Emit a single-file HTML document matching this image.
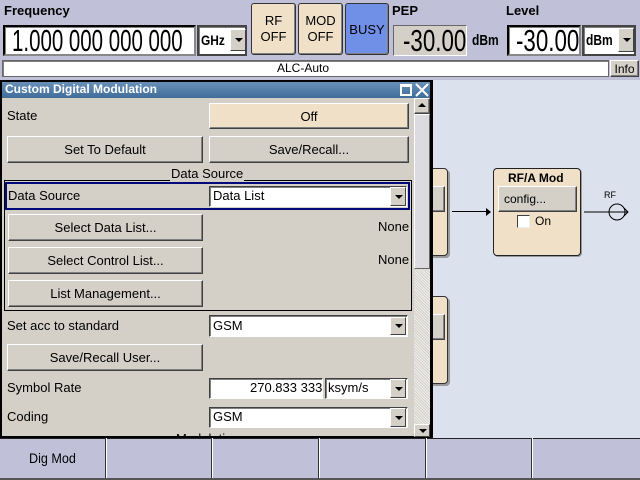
<!DOCTYPE html>
<html><head><meta charset="utf-8"><style>
*{box-sizing:border-box;margin:0;padding:0}
body{width:640px;height:480px;position:relative;overflow:hidden;background:#dce1ee;font-family:"Liberation Sans",sans-serif;font-size:13px;color:#000}
.a{position:absolute}
.lbl{position:absolute;font-size:13px;white-space:nowrap}
.bold{font-weight:bold}
.btn{position:absolute;background:#d4d0c8;border:1px solid;border-color:#fff #404040 #404040 #fff;box-shadow:inset -1px -1px #808080;text-align:center;font-size:13px;display:flex;align-items:center;justify-content:center}
.field{position:absolute;background:#fff;border:1px solid;border-color:#404040 #fff #fff #404040;box-shadow:inset 1px 1px #808080}
.arrow{position:absolute;background:#d4d0c8;border:1px solid;border-color:#fff #404040 #404040 #fff;width:16px}
.arrow:after{content:"";position:absolute;left:4px;top:50%;margin-top:-2px;border-left:4px solid transparent;border-right:4px solid transparent;border-top:4px solid #000}
.big{position:absolute;font-size:31px;transform:scaleX(.72);transform-origin:left center;white-space:nowrap;line-height:30px}
</style></head><body>
<div class="a" style="left:0;top:0;width:640px;height:80px;background:#c0c0d8"></div>
<div class="lbl bold" style="left:4px;top:3px">Frequency</div>
<div class="field" style="left:3px;top:25px;width:193px;height:31px;border:2px solid #000;border-right-color:#888;border-bottom-color:#888"></div>
<div class="big" style="left:12px;top:26px;transform:scaleX(.66)">1.000 000 000 000</div>
<div class="field" style="left:197px;top:25px;width:50px;height:31px;border:2px solid #444"></div>
<div class="lbl bold" style="left:201px;top:32px;font-size:14px;transform:scaleX(.85);transform-origin:left">GHz</div>
<div class="arrow" style="left:230px;top:29px;height:22px"></div>
<div class="btn" style="left:251px;top:3px;width:45px;height:52px;background:#f0e0c8;border:1px solid #333;border-radius:3px;line-height:16px">RF<br>OFF</div>
<div class="btn" style="left:298px;top:3px;width:45px;height:52px;background:#f0e0c8;border:1px solid #333;border-radius:3px;line-height:16px">MOD<br>OFF</div>
<div class="btn" style="left:345px;top:3px;width:44px;height:52px;background:#7090e8;border:1px solid #333;border-radius:3px">BUSY</div>
<div class="lbl bold" style="left:392px;top:3px">PEP</div>
<div class="a" style="left:393px;top:25px;width:74px;height:31px;background:#d4d0c8;border:1px solid;border-color:#666 #fff #fff #666"></div>
<div class="big" style="left:403px;top:26px">-30.00</div>
<div class="lbl bold" style="left:472px;top:32px;font-size:15px;transform:scaleX(.8);transform-origin:left">dBm</div>
<div class="lbl bold" style="left:506px;top:3px">Level</div>
<div class="field" style="left:507px;top:25px;width:74px;height:31px;border:2px solid #000;border-right-color:#888;border-bottom-color:#888"></div>
<div class="big" style="left:516px;top:26px">-30.00</div>
<div class="field" style="left:582px;top:25px;width:54px;height:31px;border:2px solid #444"></div>
<div class="lbl bold" style="left:586px;top:32px;font-size:15px;transform:scaleX(.8);transform-origin:left">dBm</div>
<div class="arrow" style="left:618px;top:28px;height:24px"></div>
<div class="field" style="left:2px;top:60px;width:607px;height:17px;border:1px solid #666"></div>
<div class="lbl" style="left:277px;top:61px;font-size:12px">ALC-Auto</div>
<div class="btn" style="left:610px;top:60px;width:29px;height:17px;font-size:12px">Info</div>

<div class="a" style="left:420px;top:168px;width:28px;height:88px;background:#f0e0c8;border:1px solid #333;border-radius:4px;box-shadow:2px 2px #999"></div>
<div class="a" style="left:420px;top:296px;width:28px;height:88px;background:#f0e0c8;border:1px solid #333;border-radius:4px;box-shadow:2px 2px #999"></div>
<div class="btn" style="left:420px;top:186px;width:25px;height:26px"></div>
<div class="btn" style="left:420px;top:314px;width:25px;height:26px"></div>
<div class="a" style="left:452px;top:211px;width:38px;height:1px;background:#000"></div>
<div class="a" style="left:486px;top:208px;border-top:4px solid transparent;border-bottom:4px solid transparent;border-left:5px solid #000"></div>
<div class="a" style="left:493px;top:168px;width:88px;height:88px;background:#f0e0c8;border:1px solid #222;border-radius:4px;box-shadow:1px 1px #999"></div>
<div class="lbl bold" style="left:508px;top:171px;font-size:12px">RF/A Mod</div>
<div class="btn" style="left:498px;top:186px;width:79px;height:26px;justify-content:flex-start;padding-left:5px;font-size:12px">config...</div>
<div class="a" style="left:517px;top:215px;width:13px;height:13px;background:#fff;border:1px solid;border-color:#404040 #eee #eee #404040"></div>
<div class="lbl" style="left:535px;top:214px;font-size:12px">On</div>
<svg class="a" style="left:580px;top:185px" width="50" height="40"><line x1="4" y1="27" x2="30" y2="27" stroke="#000"/><circle cx="37" cy="27" r="8" fill="none" stroke="#000"/><line x1="30" y1="27" x2="48" y2="27" stroke="#000"/><polyline points="44,23 48,27 44,31" fill="none" stroke="#000"/><text x="24" y="13" font-size="9" font-family="Liberation Sans">RF</text></svg>

<div class="a" style="left:0;top:80px;width:433px;height:358px;background:#d4d0c8;border:2px solid #000;border-right-width:3px"></div>
<div class="a" style="left:2px;top:82px;width:428px;height:16px;background:linear-gradient(#6890b8,#3f6d9a)"></div>
<div class="lbl bold" style="left:5px;top:82px;color:#fff;font-size:12px">Custom Digital Modulation</div>
<div class="a" style="left:400px;top:84px;width:12px;height:12px;border:2px solid #fff;border-top-width:3px"></div>
<svg class="a" style="left:415px;top:83px" width="14" height="14"><path d="M1 1L13 13M13 1L1 13" stroke="#fff" stroke-width="2"/></svg>
<div class="a" style="left:414px;top:98px;width:16px;height:338px;background:repeating-linear-gradient(45deg,#d4d0c8 0 1px,#eee 1px 2px)"></div>
<div class="btn" style="left:414px;top:98px;width:16px;height:16px"></div>
<div class="a" style="left:418px;top:103px;border-left:4px solid transparent;border-right:4px solid transparent;border-bottom:4px solid #000"></div>
<div class="a" style="left:414px;top:114px;width:16px;height:155px;background:#dcdce0;border:1px solid;border-color:#fff #666 #666 #fff"></div>
<div class="arrow" style="left:414px;top:424px;height:13px"></div>

<div class="lbl" style="left:7px;top:108px">State</div>
<div class="btn" style="left:209px;top:103px;width:200px;height:26px;background:#f0e0c8">Off</div>
<div class="btn" style="left:7px;top:136px;width:196px;height:27px">Set To Default</div>
<div class="btn" style="left:209px;top:136px;width:200px;height:27px">Save/Recall...</div>
<div class="a" style="left:4px;top:180px;width:408px;height:131px;border:1px solid #000"></div>
<div class="lbl" style="left:170px;top:166px;background:#d4d0c8;padding:0 1px">Data Source</div>
<div class="a" style="left:5px;top:182px;width:405px;height:28px;border:2px solid #00087a"></div>
<div class="lbl" style="left:8px;top:188px">Data Source</div>
<div class="field" style="left:209px;top:186px;width:198px;height:21px"></div>
<div class="lbl" style="left:213px;top:188px">Data List</div>
<div class="arrow" style="left:390px;top:187px;height:19px"></div>
<div class="btn" style="left:8px;top:214px;width:195px;height:27px">Select Data List...</div>
<div class="lbl" style="left:378px;top:219px">None</div>
<div class="btn" style="left:8px;top:247px;width:195px;height:27px">Select Control List...</div>
<div class="lbl" style="left:378px;top:252px">None</div>
<div class="btn" style="left:8px;top:280px;width:195px;height:27px">List Management...</div>
<div class="lbl" style="left:7px;top:318px">Set acc to standard</div>
<div class="field" style="left:209px;top:315px;width:199px;height:22px"></div>
<div class="lbl" style="left:213px;top:318px">GSM</div>
<div class="arrow" style="left:390px;top:317px;height:18px"></div>
<div class="btn" style="left:7px;top:344px;width:196px;height:27px">Save/Recall User...</div>
<div class="lbl" style="left:7px;top:380px">Symbol Rate</div>
<div class="field" style="left:209px;top:378px;width:114px;height:21px"></div>
<div class="lbl" style="left:250px;top:380px">270.833 333</div>
<div class="field" style="left:325px;top:378px;width:83px;height:21px"></div>
<div class="lbl" style="left:328px;top:380px">ksym/s</div>
<div class="arrow" style="left:390px;top:379px;height:19px"></div>
<div class="lbl" style="left:7px;top:409px">Coding</div>
<div class="field" style="left:209px;top:407px;width:199px;height:21px"></div>
<div class="lbl" style="left:213px;top:409px">GSM</div>
<div class="arrow" style="left:390px;top:408px;height:19px"></div>
<div class="a" style="left:170px;top:432px;width:70px;height:4px;overflow:hidden"><div class="lbl" style="left:6px;top:-1px">Modulation</div></div>

<div class="a" style="left:0;top:438px;width:640px;height:42px;background:#c0c0d8;border-top:1px solid #222"></div>
<div class="a" style="left:105px;top:438px;width:2px;height:42px;background:#333;border-right:1px solid #fff"></div>
<div class="a" style="left:211px;top:438px;width:2px;height:42px;background:#333;border-right:1px solid #fff"></div>
<div class="a" style="left:318px;top:438px;width:2px;height:42px;background:#333;border-right:1px solid #fff"></div>
<div class="a" style="left:425px;top:438px;width:2px;height:42px;background:#333;border-right:1px solid #fff"></div>
<div class="a" style="left:531px;top:438px;width:2px;height:42px;background:#333;border-right:1px solid #fff"></div>
<div class="a" style="left:0;top:478px;width:640px;height:2px;background:#555"></div>
<div class="lbl" style="left:29px;top:450px;font-size:14px;transform:scaleX(.9);transform-origin:left">Dig Mod</div>
</body></html>
